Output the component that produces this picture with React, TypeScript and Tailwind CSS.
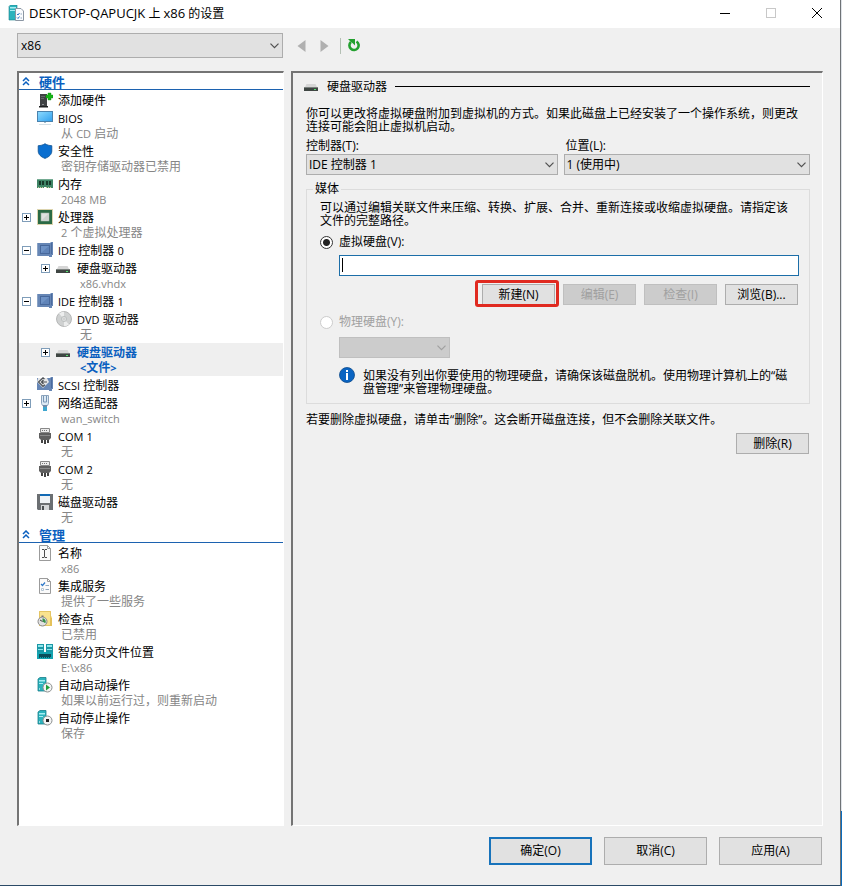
import React from "react";

/* Latin runs take their own size beside the 12px Chinese text. */
function Mixed({ children, latin = "text-[11px]" }: { children: string; latin?: string }) {
  const parts = children.split(/([\x21-\x7e]+)/);
  return (
    <>
      {parts.map((part, i) =>
        i % 2 === 1 ? (
          <span key={i} className={latin}>
            {part}
          </span>
        ) : (
          part
        )
      )}
    </>
  );
}

function Svg({ children }: { children: React.ReactNode }) {
  return (
    <svg viewBox="0 0 16 16" className="size-4 shrink-0" aria-hidden="true">
      {children}
    </svg>
  );
}

const AddHardwareIcon = () => (
  <Svg>
    <path d="M3 2h7v12H3z" fill="#3f4244" />
    <path d="M4 4h4v1H4zM4 6h3v1H4z" fill="#63686b" />
    <path d="M2 14h9v1.500H2z" fill="#1d1f20" />
    <path d="M5 12h2v1H5z" fill="#8d9194" />
    <path d="M11 1h3v2h2v3h-2v2h-3V6H9V3h2z" fill="#17b317" stroke="#0b8d10" strokeWidth=".4" />
  </Svg>
);

const BiosIcon = () => (
  <Svg>
    <defs>
      <linearGradient id="screen" x1="0" y1="0" x2="1" y2="1">
        <stop offset="0" stopColor="#8fdcff" />
        <stop offset="1" stopColor="#2f9fee" />
      </linearGradient>
    </defs>
    <rect x=".5" y="1.500" width="15" height="10" fill="url(#screen)" stroke="#4a82ad" />
    <path d="M7 12h2v1H7z" fill="#9dbccf" />
    <path d="M2 14.500h12" stroke="#d5e0e6" />
  </Svg>
);

const ShieldIcon = () => (
  <Svg>
    <path
      d="M8 .7c2 1.300 4.200 1.900 6.800 2V8c0 3.600-3 6-6.800 7.400C4.200 14 1.200 11.600 1.200 8V2.700C3.800 2.600 6 2 8 .7z"
      fill="#0a6fd0"
      stroke="#0b4f8f"
      strokeWidth=".8"
    />
  </Svg>
);

const MemoryIcon = () => (
  <Svg>
    <path d="M0 3h16v9H0z" fill="#3f8566" />
    <path d="M2 5h2v4H2zM5 5h2v4H5zM9 5h2v4H9zM12 5h2v4h-2z" fill="#17392a" />
    <path d="M0 3.500h16" stroke="#74ab92" />
    <path d="M1 11.500h14" stroke="#c9cf9a" strokeDasharray="1 1" />
    <path d="M7 11h2v1H7z" fill="#fff" />
  </Svg>
);

const CpuIcon = () => (
  <Svg>
    <rect x=".5" y=".5" width="15" height="15" fill="none" stroke="#b9a95c" strokeDasharray="1 1" />
    <rect x="1" y="1" width="14" height="14" fill="#2b6a45" />
    <rect x="4" y="4" width="8" height="8" fill="#dfe2e0" stroke="#9db3a5" strokeWidth=".6" />
    <path d="M4.500 11.500l7-7v7z" fill="#cdd2cf" />
  </Svg>
);

const ControllerIcon = () => (
  <Svg>
    <path d="M0 1h13l1-1h2v13h-1v2h-3v-1H0z" fill="#6686b5" />
    <path d="M0 1h1v13H0z" fill="#8aa3c6" />
    <rect x="3.500" y="3.500" width="9" height="8" fill="#6f93c6" stroke="#47689b" />
    <path d="M4 11l8-7v7z" fill="#5f83b8" />
    <path d="M14.500 1v11" stroke="#4b6b9e" />
  </Svg>
);

const DriveIcon = () => (
  <Svg>
    <path d="M2.500 6h9l2 4H.5z" fill="#d6d6d6" />
    <path d="M0 9h14v4H0z" fill="#3f4643" />
    <path d="M0 9.500h14" stroke="#7b817e" />
    <path d="M10 11h2v1h-2z" fill="#55e26f" />
  </Svg>
);

const DvdIcon = () => (
  <Svg>
    <circle cx="8" cy="8" r="7.500" fill="#cfd1d1" stroke="#a9abab" strokeWidth=".8" />
    <path d="M8 8L3 2.500A7.300 7.300 0 0 1 8 .8zM8 8l5 5.500a7.300 7.300 0 0 1-5 1.700z" fill="#eceded" />
    <circle cx="8" cy="8" r="2.600" fill="#e2e4e4" stroke="#b4b7b7" strokeWidth=".8" />
    <circle cx="8" cy="8" r="1" fill="#fff" stroke="#9a9d9d" strokeWidth=".5" />
  </Svg>
);

const ScsiIcon = () => (
  <Svg>
    <path d="M0 1h13l1-1h2v12h-1v2h-3v-1H0z" fill="#6686b5" />
    <path d="M14.500 1v10" stroke="#4b6b9e" />
    <path d="M1 1h9l2 4-6 6-6-6z" fill="#e6e7e8" />
    <path d="M7.500 2L6 .8 1.500 5 6 9.500l2-1.700M4 5h6M6.500 3L4.500 5l2 2" fill="none" stroke="#4c5055" strokeWidth="1.200" />
  </Svg>
);

const NetworkIcon = () => (
  <Svg>
    <path d="M4.500.5h7v8l-1 2h-5l-1-2z" fill="#dce9f4" stroke="#8aa3bd" />
    <path d="M6.500 1v6h3V1" fill="none" stroke="#7795b4" />
    <path d="M6 10h4v2H6z" fill="#6f8ba8" />
    <path d="M6 12h4v4H6z" fill="#3da6cf" />
  </Svg>
);

const ComIcon = () => (
  <Svg>
    <path d="M3.500.5h9v4h-9z" fill="#ededed" stroke="#888" />
    <path d="M5 2.500h6" stroke="#777" strokeDasharray="1 1" />
    <path d="M2 5h12v5l-2 2H4l-2-2z" fill="#5f5f5f" />
    <path d="M3 7.500h10" stroke="#8a8a8a" />
    <path d="M4 12h2v3H4zM10 12h2v3h-2zM7 12h2v4H7z" fill="#444" />
  </Svg>
);

const FloppyIcon = () => (
  <Svg>
    <path d="M0 0h16v16H1l-1-1z" fill="#6b6f72" />
    <path d="M3 0h10v9H3z" fill="#eef2f5" />
    <path d="M3 0h10v2H3z" fill="#1169b4" />
    <path d="M4 11h8v5H4z" fill="#d3d6d8" />
    <path d="M5 12h2v4H5z" fill="#4a4e51" />
  </Svg>
);

const Page = () => (
  <path d="M2.500.5h8l3 3v12h-11z M10.500.5v3h3" fill="#fafafa" stroke="#9b9b9b" />
);

const NameIcon = () => (
  <Svg>
    <Page />
    <path d="M5 4.500h2.200M7.800 4.500H10M5 12.500h2.200M7.800 12.500H10M7.500 5v7" stroke="#4d4d4d" strokeWidth="1" />
  </Svg>
);

const ServicesIcon = () => (
  <Svg>
    <Page />
    <path d="M4 6l1.500 1.500L8 4.500" fill="none" stroke="#2c77c9" strokeWidth="1.200" />
    <path d="M8.500 7.500H12M8.500 11.500H12" stroke="#8fa7be" />
    <path d="M4.500 10.500h2v2h-2z" fill="#fff" stroke="#b5c4d2" />
  </Svg>
);

const CheckpointIcon = () => (
  <Svg>
    <path d="M2 0h12v5l1 1v9H2z" fill="#f6dc80" />
    <path d="M2.500.5h11v14h-11z" fill="#f9e28f" stroke="#dcba55" strokeWidth=".7" />
    <path d="M14 7h1v8h-2v-7z" fill="#e5c25a" />
    <circle cx="5.500" cy="10.500" r="4.500" fill="#e2e2e2" stroke="#8a8a8a" />
    <path d="M4.500 4.500h2v1.500h-2z" fill="#777" />
    <path d="M5.500 10.500V7.200a3.300 3.300 0 0 1 2.800 5z" fill="#37904a" />
    <path d="M5.500 10.500L3 9" stroke="#444" />
  </Svg>
);

const PagingIcon = () => (
  <Svg>
    <path d="M0 0h7v9H0zM9 0h7v9H9z" fill="#1b98a6" />
    <path d="M1 1h5v2H1zM10 1h5v2h-5zM1 5h5v1H1zM10 5h5v1h-5z" fill="#8fe6ec" />
    <path d="M0 8h16v7H0z" fill="#14a3b0" />
    <path d="M2 10h12v3H2z" fill="#0b4e5b" />
    <path d="M2 13.500h12" stroke="#0b4e5b" strokeDasharray="1 1" />
  </Svg>
);

const ServerBody = () => (
  <>
    <path d="M1 2l2-1.500h6V14H1z" fill="#2cb3bd" stroke="#177f8a" strokeWidth=".8" />
    <path d="M2 3h6v1.500H2zM2 6h4v1H2z" fill="#a5eef2" />
    <path d="M2 12h1" stroke="#fff" />
  </>
);

const StartIcon = () => (
  <Svg>
    <ServerBody />
    <circle cx="10.500" cy="10.500" r="4.500" fill="#f4f4f4" stroke="#8b8f8f" />
    <path d="M9 7.500l4 3-4 3z" fill="#1f9d3a" />
  </Svg>
);

const StopIcon = () => (
  <Svg>
    <ServerBody />
    <circle cx="10.500" cy="10.500" r="4.500" fill="#f4f4f4" stroke="#8b8f8f" />
    <path d="M9 9h3v3H9z" fill="#222" />
  </Svg>
);

const SettingsIcon = () => (
  <Svg>
    <path d="M1 1.500L2.500 0H9v15H1z" fill="#2cb3bd" stroke="#177f8a" strokeWidth=".6" />
    <path d="M2 2h6v1.500H2zM2 5h6v1H2z" fill="#a5eef2" />
    <path d="M7.500 3.500H13l2.500 2.500v9.500h-8z" fill="#fafcff" stroke="#8b96a3" />
    <path d="M9 9l1 1 1.500-2M9 12.500l1 1 1.500-2" fill="none" stroke="#2c77c9" />
    <path d="M12.500 9H14M12.500 13H14" stroke="#8fa7be" />
  </Svg>
);

const InfoIcon = () => (
  <Svg>
    <circle cx="8" cy="8" r="7.500" fill="#0a64c2" stroke="#0b4a8c" strokeWidth=".8" />
    <path d="M7 3h2v2H7zM7 6h2v7H7z" fill="#fff" />
  </Svg>
);

const Chevron = ({ className = "" }: { className?: string }) => (
  <svg
    viewBox="0 0 9 6"
    aria-hidden="true"
    className={`pointer-events-none absolute top-1/2 right-1 h-[6px] w-[9px] -translate-y-1/2 ${className}`}
  >
    <path d="M.5.7l4 4 4-4" fill="none" stroke="currentColor" strokeWidth="1.200" />
  </svg>
);

type Node = {
  label: string;
  sub?: string;
  icon: React.ReactNode;
  toggle?: "plus" | "minus";
  nested?: boolean;
  selected?: boolean;
};

const hardware: Node[] = [
  { label: "添加硬件", icon: <AddHardwareIcon /> },
  { label: "BIOS", sub: "从 CD 启动", icon: <BiosIcon /> },
  { label: "安全性", sub: "密钥存储驱动器已禁用", icon: <ShieldIcon /> },
  { label: "内存", sub: "2048 MB", icon: <MemoryIcon /> },
  { label: "处理器", sub: "2 个虚拟处理器", icon: <CpuIcon />, toggle: "plus" },
  { label: "IDE 控制器 0", icon: <ControllerIcon />, toggle: "minus" },
  { label: "硬盘驱动器", sub: "x86.vhdx", icon: <DriveIcon />, toggle: "plus", nested: true },
  { label: "IDE 控制器 1", icon: <ControllerIcon />, toggle: "minus" },
  { label: "DVD 驱动器", sub: "无", icon: <DvdIcon />, nested: true },
  { label: "硬盘驱动器", sub: "<文件>", icon: <DriveIcon />, toggle: "plus", nested: true, selected: true },
  { label: "SCSI 控制器", icon: <ScsiIcon /> },
  { label: "网络适配器", sub: "wan_switch", icon: <NetworkIcon />, toggle: "plus" },
  { label: "COM 1", sub: "无", icon: <ComIcon /> },
  { label: "COM 2", sub: "无", icon: <ComIcon /> },
  { label: "磁盘驱动器", sub: "无", icon: <FloppyIcon /> },
];

const management: Node[] = [
  { label: "名称", sub: "x86", icon: <NameIcon /> },
  { label: "集成服务", sub: "提供了一些服务", icon: <ServicesIcon /> },
  { label: "检查点", sub: "已禁用", icon: <CheckpointIcon /> },
  { label: "智能分页文件位置", sub: "E:\\x86", icon: <PagingIcon /> },
  { label: "自动启动操作", sub: "如果以前运行过，则重新启动", icon: <StartIcon /> },
  { label: "自动停止操作", sub: "保存", icon: <StopIcon /> },
];

function Toggle({ kind }: { kind: "plus" | "minus" }) {
  return (
    <button type="button" aria-label={kind === "plus" ? "展开" : "折叠"} className="block size-[9px]">
      <svg viewBox="0 0 9 9" className="size-[9px]" aria-hidden="true">
        <rect x=".5" y=".5" width="8" height="8" fill="#fff" stroke="#7f9db9" />
        <path d={kind === "plus" ? "M2 4.500h5M4.500 2v5" : "M2 4.500h5"} stroke="#000" />
      </svg>
    </button>
  );
}

function TreeRow({ node }: { node: Node }) {
  return (
    <li
      className={`${node.nested ? "pl-[22px]" : "pl-[3px]"} ${node.selected ? "bg-[#efefef] font-bold text-[#0a5fbf]" : ""}`}
    >
      <div className="flex h-[18px] items-center">
        <span className="w-[15px] shrink-0">{node.toggle && <Toggle kind={node.toggle} />}</span>
        {node.icon}
        <span className="pt-[2px] pl-[5px] leading-4 whitespace-nowrap">
          <Mixed>{node.label}</Mixed>
        </span>
      </div>
      {node.sub && (
        <div className={`pb-px pl-[39px] leading-[14px] whitespace-nowrap ${node.selected ? "" : "text-[#868686]"}`}>
          <Mixed>{node.sub}</Mixed>
        </div>
      )}
    </li>
  );
}

function TreeSection({ title, nodes }: { title: string; nodes: Node[] }) {
  return (
    <section>
      <h2 className="mb-px flex h-[17px] items-center border-b border-[#1c62b0] pl-[3px] text-[13px] font-bold text-[#0a5fbf]">
        <svg viewBox="0 0 8 9" className="h-[9px] w-2" aria-hidden="true">
          <path d="M1 4l3-3 3 3M1 8l3-3 3 3" fill="none" stroke="#0a5fbf" strokeWidth="1.500" />
        </svg>
        <span className="pt-px pl-[9px] leading-4">{title}</span>
      </h2>
      <ul>
        {nodes.map((node, i) => (
          <TreeRow key={i} node={node} />
        ))}
      </ul>
    </section>
  );
}

function Button({ children, disabled = false }: { children: string; disabled?: boolean }) {
  return (
    <button
      type="button"
      disabled={disabled}
      className={`h-[21px] w-[73px] border leading-4 ${
        disabled ? "border-[#bfbfbf] bg-[#cccccc] text-[#a0a0a0]" : "border-[#adadad] bg-[#e1e1e1]"
      }`}
    >
      {children}
    </button>
  );
}

const footerButton = "h-7 w-[103px] bg-[#e1e1e1] leading-4";
const selectBase = "w-full appearance-none rounded-none border outline-none";
const inset = "border-t-2 border-l-2 border-r border-b border-t-[#747474] border-l-[#747474] border-r-white border-b-white";

export default function App() {
  return (
    <div className="flex min-h-screen bg-[#dfe3e8] font-['Open_Sans','Noto_Sans_CJK_SC',sans-serif] text-[12px] text-black">
      <div className="flex min-w-0 flex-1 flex-col border-r border-b border-r-[#6e7276] border-b-[#2b4a66] bg-[#f0f0f0]">
        <header className="flex h-7 shrink-0 items-center bg-white pb-[2px] pl-2">
          <SettingsIcon />
          <h1 className="flex-1 pl-[5px] leading-4 whitespace-nowrap">
            <Mixed latin="text-[13px]">DESKTOP-QAPUCJK 上 x86 的设置</Mixed>
          </h1>
          <button type="button" aria-label="最小化" className="flex h-6 w-[46px] items-center justify-center">
            <svg viewBox="0 0 10 10" className="size-[10px]" aria-hidden="true">
              <path d="M0 5.500h10" stroke="#000" />
            </svg>
          </button>
          <button type="button" disabled aria-label="最大化" className="flex h-6 w-[46px] items-center justify-center">
            <svg viewBox="0 0 10 10" className="size-[10px]" aria-hidden="true">
              <rect x=".5" y=".5" width="9" height="9" fill="none" stroke="#c8c8c8" />
            </svg>
          </button>
          <button type="button" aria-label="关闭" className="flex h-6 w-[46px] items-center justify-center">
            <svg viewBox="0 0 10 10" className="size-[10px]" aria-hidden="true">
              <path d="M0 0l10 10M10 0L0 10" stroke="#000" />
            </svg>
          </button>
        </header>

        <div className="flex shrink-0 items-center pt-[5px] pb-[13px] pl-[17px]">
          <div className="relative w-[266px]">
            <select aria-label="虚拟机" className={`${selectBase} h-[25px] border-[#adadad] bg-[#e1e1e1] pl-[3px]`}>
              <option>x86</option>
            </select>
            <Chevron className="text-[#505050]" />
          </div>
          <button type="button" aria-label="后退" disabled className="ml-[14px]">
            <svg viewBox="0 0 9 12" className="h-3 w-[9px]" aria-hidden="true">
              <path d="M8.500 0v12L.5 6z" fill="#b0b0b0" />
            </svg>
          </button>
          <button type="button" aria-label="前进" disabled className="ml-[14px]">
            <svg viewBox="0 0 9 12" className="h-3 w-[9px]" aria-hidden="true">
              <path d="M.5 0v12l8-6z" fill="#b0b0b0" />
            </svg>
          </button>
          <span className="ml-[11px] h-4 w-px bg-[#b4c0b4]" />
          <button type="button" aria-label="刷新" className="ml-[7px]">
            <svg viewBox="0 0 12 13" className="h-[13px] w-3" aria-hidden="true">
              <path d="M8.500 2.500a4.600 4.600 0 1 1-5.600.5" fill="none" stroke="#23a02f" strokeWidth="2.600" />
              <path d="M0 0h7v6.500L5 4.500 3 3z" fill="#23a02f" />
            </svg>
          </button>
        </div>

        <main className="flex flex-1 gap-[7px] pr-[17px] pl-[17px]">
          <nav aria-label="设置" className={`w-[267px] shrink-0 bg-white ${inset}`}>
            <TreeSection title="硬件" nodes={hardware} />
            <TreeSection title="管理" nodes={management} />
          </nav>

          <div className={`min-w-0 flex-1 pr-3 pl-[13px] ${inset}`}>
            <div className="flex h-[26px] items-center">
              <span className="-ml-[2px]">
                <DriveIcon />
              </span>
              <h2 className="pt-px pl-[7px] leading-4">硬盘驱动器</h2>
              <span className="ml-2 h-px flex-1 bg-black" />
            </div>
            <p className="mt-2 pr-1 leading-[13px]">
              你可以更改将虚拟硬盘附加到虚拟机的方式。如果此磁盘上已经安装了一个操作系统，则更改连接可能会阻止虚拟机启动。
            </p>
            <div className="mt-[5px] flex gap-[6px]">
              <div className="flex-[251]">
                <label htmlFor="controller" className="block leading-4">
                  控制器(T):
                </label>
                <div className="relative">
                  <select id="controller" className={`${selectBase} block h-[21px] border-[#adadad] bg-[#e1e1e1] pl-[2px]`}>
                    <option>IDE 控制器 1</option>
                  </select>
                  <Chevron className="text-[#505050]" />
                </div>
              </div>
              <div className="flex-[246]">
                <label htmlFor="location" className="block pl-[2px] leading-4">
                  位置(L):
                </label>
                <div className="relative">
                  <select id="location" className={`${selectBase} block h-[21px] border-[#adadad] bg-[#e1e1e1] pl-[2px]`}>
                    <option>1 (使用中)</option>
                  </select>
                  <Chevron className="text-[#505050]" />
                </div>
              </div>
            </div>

            <fieldset className="mt-2 border border-[#dcdcdc] pr-[10px] pb-2 pl-[13px]">
              <legend className="-ml-[7px] px-[2px] leading-3">媒体</legend>
              <p className="pt-[6px] leading-[13px]">
                可以通过编辑关联文件来压缩、转换、扩展、合并、重新连接或收缩虚拟硬盘。请指定该文件的完整路径。
              </p>
              <div className="mt-[7px] flex items-center">
                <input
                  type="radio"
                  id="virtual"
                  name="media"
                  defaultChecked
                  className="size-[13px] appearance-none rounded-full border border-[#333] bg-white bg-[radial-gradient(circle,#222_0_3px,#fff_4px)]"
                />
                <label htmlFor="virtual" className="pl-[6px] leading-4">
                  虚拟硬盘(V):
                </label>
              </div>
              <div className="relative mt-[5px] ml-[19px]">
                <input
                  type="text"
                  aria-label="虚拟硬盘路径"
                  className="block h-[21px] w-full border border-[#1c6ea8] bg-white px-1 outline-none"
                />
                <span className="absolute top-[3px] left-[3px] h-[14px] w-px bg-black" />
              </div>
              <div className="mt-2 flex justify-end gap-2 pr-px">
                <div className="relative flex">
                  <Button>新建(N)</Button>
                  <span className="pointer-events-none absolute -top-1 -right-1 -bottom-[2px] -left-[7px] rounded-[3px] border-3 border-[#e02a20]" />
                </div>
                <Button disabled>编辑(E)</Button>
                <Button disabled>检查(I)</Button>
                <Button>浏览(B)...</Button>
              </div>
              <div className="mt-[9px] flex items-center">
                <input
                  type="radio"
                  id="physical"
                  name="media"
                  disabled
                  className="size-[13px] appearance-none rounded-full border border-[#cccccc] bg-white"
                />
                <label htmlFor="physical" className="pl-[6px] leading-4 text-[#a0a0a0]">
                  物理硬盘(Y):
                </label>
              </div>
              <div className="relative mt-[7px] ml-[19px] w-[111px]">
                <select aria-label="物理硬盘" disabled className={`${selectBase} block h-[21px] border-[#bfbfbf] bg-[#cccccc]`} />
                <Chevron className="text-[#a0a0a0]" />
              </div>
              <div className="mt-[9px] ml-[19px] flex gap-2">
                <InfoIcon />
                <p className="pt-[2px] leading-[13px]">
                  如果没有列出你要使用的物理硬盘，请确保该磁盘脱机。使用物理计算机上的“磁盘管理”来管理物理硬盘。
                </p>
              </div>
            </fieldset>

            <p className="mt-[9px] leading-[13px]">
              若要删除虚拟硬盘，请单击“删除”。这会断开磁盘连接，但不会删除关联文件。
            </p>
            <div className="mt-[7px] flex justify-end pr-px">
              <Button>删除(R)</Button>
            </div>
          </div>
        </main>

        <footer className="flex shrink-0 justify-end gap-3 pt-[11px] pr-[18px] pb-5">
          <button type="button" className={`${footerButton} border-2 border-[#1873bb]`}>
            确定(O)
          </button>
          <button type="button" className={`${footerButton} border border-[#adadad]`}>
            取消(C)
          </button>
          <button type="button" className={`${footerButton} border border-[#adadad]`}>
            应用(A)
          </button>
        </footer>
      </div>
      <div className="flex w-px shrink-0 flex-col justify-end">
        <div className="h-[75px] bg-[#0a6cbd]" />
      </div>
    </div>
  );
}
